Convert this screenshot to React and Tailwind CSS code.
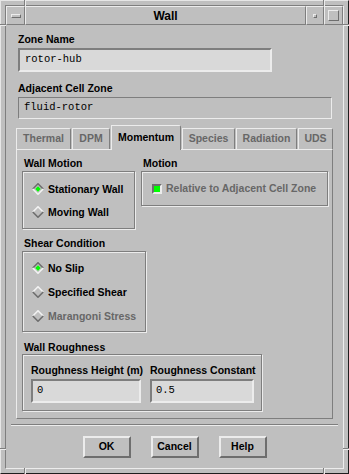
import React from 'react';

function Label({ children, className = '' }) {
  return (
    <div className={`h-[12px] leading-[12px] text-[10.5px] font-bold text-black whitespace-nowrap ${className}`}>
      {children}
    </div>
  );
}

function Radio({ label, selected, disabled }) {
  return (
    <div className="flex items-center gap-[4px] h-[23px]">
      <svg width="12" height="12" viewBox="0 0 12 12">
        <polygon points="6,0.5 11.5,6 6,11.5 0.5,6" fill="#bfbfbf" />
        <polyline
          points="0.8,6 6,0.8 11.2,6"
          fill="none"
          stroke={selected ? '#6e6e6e' : '#f2f2f2'}
          strokeWidth="1.6"
        />
        <polyline
          points="0.8,6 6,11.2 11.2,6"
          fill="none"
          stroke={selected ? '#f2f2f2' : '#6e6e6e'}
          strokeWidth="1.6"
        />
        {selected && <polygon points="6,3.3 8.7,6 6,8.7 3.3,6" fill="#00ff00" />}
      </svg>
      <span
        className={`text-[10.5px] font-bold leading-[12px] whitespace-nowrap ${
          disabled ? 'text-[#676767]' : 'text-black'
        }`}
      >
        {label}
      </span>
    </div>
  );
}

function Group({ className = '', children }) {
  return (
    <div
      className={`border border-[#7e7e7e] shadow-[inset_1px_1px_0_#ececec,1px_1px_0_#ececec] ${className}`}
    >
      {children}
    </div>
  );
}

function Input({ value, className = '' }) {
  return (
    <div
      className={`h-[24px] bg-[#d9d9d9] border-2 border-t-[#7e7e7e] border-l-[#7e7e7e] border-r-[#ececec] border-b-[#ececec] flex items-center pl-[4px] text-[10.5px] font-['Liberation_Mono',monospace] text-black ${className}`}
    >
      {value}
    </div>
  );
}

const tabs = [
  { name: 'Thermal', w: 'w-[55px]' },
  { name: 'DPM', w: 'w-[38px]' },
  { name: 'Momentum', w: 'w-[70px]', active: true },
  { name: 'Species', w: 'w-[53px]' },
  { name: 'Radiation', w: 'w-[61px]' },
  { name: 'UDS', w: 'w-[35px]' },
];

function Button({ children }) {
  return (
    <div className="w-[48px] h-[22px] border-2 border-t-[#ececec] border-l-[#ececec] border-r-[#6e6e6e] border-b-[#6e6e6e] flex items-center justify-center text-[10.5px] font-bold text-black">
      {children}
    </div>
  );
}

export default function App() {
  return (
    <div className="relative w-[349px] h-[474px] bg-[#bfbfbf] border border-t-[#e6e6e6] border-l-[#e6e6e6] border-r-[#1e1e1e] border-b-[#1e1e1e] p-[4px] font-['Liberation_Sans',Arial,sans-serif] select-none">
      {/* frame resize notches */}
      <div className="absolute left-[23px] top-[-1px] w-[2px] h-[6px] border-l border-r border-l-[#7e7e7e] border-r-[#ececec]" />
      <div className="absolute left-[322px] top-[-1px] w-[2px] h-[6px] border-l border-r border-l-[#7e7e7e] border-r-[#ececec]" />
      <div className="absolute left-[23px] bottom-[-1px] w-[2px] h-[6px] border-l border-r border-l-[#7e7e7e] border-r-[#ececec]" />
      <div className="absolute left-[322px] bottom-[-1px] w-[2px] h-[6px] border-l border-r border-l-[#7e7e7e] border-r-[#ececec]" />
      <div className="absolute left-[-1px] top-[23px] w-[6px] h-[2px] border-t border-b border-t-[#7e7e7e] border-b-[#ececec]" />
      <div className="absolute left-[-1px] top-[447px] w-[6px] h-[2px] border-t border-b border-t-[#7e7e7e] border-b-[#ececec]" />
      <div className="absolute right-[-1px] top-[23px] w-[6px] h-[2px] border-t border-b border-t-[#7e7e7e] border-b-[#ececec]" />
      <div className="absolute right-[-1px] top-[447px] w-[6px] h-[2px] border-t border-b border-t-[#7e7e7e] border-b-[#ececec]" />

      <div className="h-full flex flex-col border border-t-[#7e7e7e] border-l-[#7e7e7e] border-r-[#ececec] border-b-[#ececec]">
        {/* Title bar */}
        <div className="flex h-[19px]">
          <div className="w-[19px] border border-t-[#ececec] border-l-[#ececec] border-r-[#7e7e7e] border-b-[#7e7e7e] flex items-center justify-center">
            <div className="w-[10px] h-[4px] border border-t-[#ececec] border-l-[#ececec] border-r-[#6e6e6e] border-b-[#6e6e6e]" />
          </div>
          <div className="flex-1 border border-t-[#ececec] border-l-[#ececec] border-r-[#7e7e7e] border-b-[#7e7e7e] flex items-center justify-center text-[12px] font-bold text-black">
            Wall
          </div>
          <div className="w-[18px] border border-t-[#ececec] border-l-[#ececec] border-r-[#7e7e7e] border-b-[#7e7e7e] flex items-center justify-center">
            <div className="w-[4px] h-[4px] border border-t-[#ececec] border-l-[#ececec] border-r-[#6e6e6e] border-b-[#6e6e6e]" />
          </div>
          <div className="w-[19px] border border-t-[#ececec] border-l-[#ececec] border-r-[#7e7e7e] border-b-[#7e7e7e] flex items-center justify-center">
            <div className="w-[11px] h-[11px] border border-t-[#ececec] border-l-[#ececec] border-r-[#6e6e6e] border-b-[#6e6e6e]" />
          </div>
        </div>

        {/* Content */}
        <div className="flex-1 flex flex-col">
          <div className="pl-[10px] pt-[8px]">
            <Label className="ml-[2px]">Zone Name</Label>
            <Input value="rotor-hub" className="ml-[2px] mt-[3px] w-[254px] pl-[5px]" />

            <Label className="ml-[2px] mt-[10px]">Adjacent Cell Zone</Label>
            <div className="ml-[2px] mt-[3px] w-[314px] h-[22px] border border-t-[#7e7e7e] border-l-[#7e7e7e] border-r-[#ececec] border-b-[#ececec] flex items-center pl-[5px] text-[10.5px] font-['Liberation_Mono',monospace] text-black">
              fluid-rotor
            </div>

            {/* Tabs */}
            <div className="mt-[6px] flex items-end gap-[1px]">
              {tabs.map((t) =>
                t.active ? (
                  <div
                    key={t.name}
                    className={`${t.w} h-[25px] -mb-[1px] relative z-10 bg-[#bfbfbf] border-l border-t border-r border-l-[#ececec] border-t-[#ececec] border-r-[#7e7e7e] rounded-tr-[2px] flex items-center justify-center pb-[1px] text-[10.5px] font-bold text-black`}
                  >
                    {t.name}
                  </div>
                ) : (
                  <div
                    key={t.name}
                    className={`${t.w} h-[21px] border-l border-t border-r border-l-[#ececec] border-t-[#ececec] border-r-[#7e7e7e] rounded-tr-[2px] flex items-center justify-center text-[10.5px] font-bold text-[#676767]`}
                  >
                    {t.name}
                  </div>
                )
              )}
            </div>

            {/* Tab panel */}
            <div className="w-[317px] h-[270px] border border-t-[#ececec] border-l-[#ececec] border-r-[#7e7e7e] border-b-[#7e7e7e] pl-[5px] pt-[7px]">
              <div className="flex gap-[6px]">
                <div className="w-[113px]">
                  <Label className="ml-[2px]">Wall Motion</Label>
                  <Group className="mt-[2px] h-[58px] pl-[9px] pt-[5px]">
                    <Radio label="Stationary Wall" selected />
                    <Radio label="Moving Wall" />
                  </Group>
                </div>
                <div className="w-[187px]">
                  <Label className="ml-[2px]">Motion</Label>
                  <Group className="mt-[2px] h-[35px] pl-[10px] flex items-center gap-[4px]">
                    <span className="w-[10px] h-[10px] border-2 border-t-[#6e6e6e] border-l-[#6e6e6e] border-r-[#ececec] border-b-[#ececec] bg-[#00ff00]" />
                    <span className="text-[10.5px] font-bold text-[#676767] whitespace-nowrap">
                      Relative to Adjacent Cell Zone
                    </span>
                  </Group>
                </div>
              </div>

              <Label className="ml-[2px] mt-[8px]">Shear Condition</Label>
              <Group className="mt-[2px] w-[124px] h-[81px] pl-[9px] pt-[4px]">
                <div className="flex flex-col gap-[1px]">
                  <Radio label="No Slip" selected />
                  <Radio label="Specified Shear" />
                  <Radio label="Marangoni Stress" disabled />
                </div>
              </Group>

              <Label className="ml-[2px] mt-[9px]">Wall Roughness</Label>
              <Group className="mt-[1px] w-[240px] h-[57px] pl-[8px] pt-[9px] flex">
                <div className="w-[119px]">
                  <Label>Roughness Height (m)</Label>
                  <Input value="0" className="mt-[3px] w-[110px]" />
                </div>
                <div>
                  <Label>Roughness Constant</Label>
                  <Input value="0.5" className="mt-[3px] w-[104px]" />
                </div>
              </Group>
            </div>
          </div>

          {/* separator */}
          <div className="ml-[5px] mt-[5px] w-[327px] h-[2px] border-t border-b border-t-[#7e7e7e] border-b-[#ececec]" />

          {/* buttons */}
          <div className="mt-[10px] flex justify-center gap-[20px]">
            <Button>OK</Button>
            <Button>Cancel</Button>
            <Button>Help</Button>
          </div>
        </div>
      </div>
    </div>
  );
}
